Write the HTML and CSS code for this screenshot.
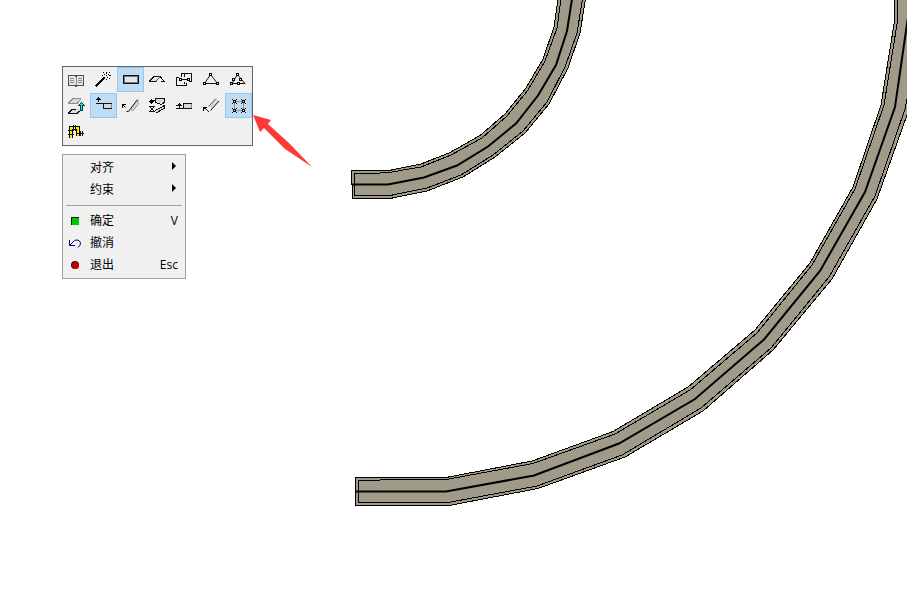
FILE: index.html
```html
<!DOCTYPE html>
<html lang="zh-CN">
<head>
  <meta charset="UTF-8">
  <meta name="viewport" content="width=device-width, initial-scale=1.0">
  <title>Wall Tool</title>
  <link rel="stylesheet" href="styles.css">
</head>
<body>
  <svg class="drawing" viewBox="0 0 907 590" preserveAspectRatio="xMinYMin slice" aria-hidden="true">
    <!-- inner curved wall -->
    <g class="wall">
      <path class="fill edge" d="M351.5 170.5H389L421 164L450 152.5L480 135.5L505 114L526 88L543 59L554 27L558 -1H585.5L580 33L568 68L549 104L525 133L495 157L463 177L427 191L390 198.5H352.5V184.5H351.5Z"/>
      <path class="edge" d="M561 -1L557 28L545 61L528 90L507 116L482 138L451 155L421 167L389 172.5L371 173.5H354.5V195.5H390L427 188L461 175L493 155L523 131L547 102L565 67L577 33L582.5 -1"/>
      <path class="axis" d="M352 184.500H388L424 177.5L457 165.5L488 146.5L516 123.5L538 95.5L556 65L567 31L572 -1"/>
    </g>
    <!-- outer curved wall -->
    <g class="wall">
      <path class="fill edge" d="M355.5 477.5H446L532 461L613 431.5L688 387L755 330L810 263L853 187L881 105L894.5 21V-1H920V75L907 115L877 199L832 279L773 350L703 411L625 457L538 488.5L449 505.5H355.5Z"/>
      <path class="edge" d="M897.5 -1V21L884 105L855 189L812 265L757 333L690 390L615 434L533 463.5L446 479.5H402L358.5 480.5V502.5H448L537 486L622 455L701 408L771 348L829 277L875 196L905 109L912 75"/>
      <path class="axis" d="M356 491.500H446L534 475.5L619 443.5L695 399L764 339.5L820 271L865 192L895 107L907 24L911 -1"/>
    </g>
    <path class="pointer" d="M253 115L271 120L268 124L290 144L312 167L285 149L264 128L260 132Z"/>
  </svg>

  <main class="palette">
    <div class="toolbar" role="toolbar" aria-label="工具">
      <button class="tool" aria-label="设置">
        <svg viewBox="0 0 27 25">
          <path class="light" d="M5 8h16v11H5z"/>
          <path class="outline" d="M5.500 18.500V8.500H12L13 9.500L14 8.500H20.500V18.500H14L13 19.500L12 18.500Z"/>
          <path class="grey" d="M7 11.500h4M7 13.500h4M7 15.500h4M15 11.500h4M15 13.500h4M15 15.500h4M13 10v8"/>
        </svg>
      </button>
      <button class="tool" aria-label="魔术棒">
        <svg viewBox="0 0 27 25">
          <path class="wand" d="M5.500 19.500L14.500 10.500"/>
          <path class="ink" d="M13 5h1v1h-1zM16 5h1v2h-1zM19 5h1v1h-1zM14 7h1v1h-1zM18 7h1v1h-1zM16 8h1v1h-1zM12 8h1v1h-1zM19 8h2v1h-2zM17 10h1v1h-1zM19 11h1v1h-1zM16 12h1v1h-1z"/>
        </svg>
      </button>
      <button class="tool active" aria-label="矩形" aria-pressed="true">
        <svg viewBox="0 0 27 25">
          <path class="light" d="M6 8h16v9H6z"/>
          <path class="dark" d="M6.500 8.500h15v8h-15z"/>
          <path class="shade" d="M7.500 9.500h13v6h-13z"/>
        </svg>
      </button>
      <button class="tool" aria-label="坡面">
        <svg viewBox="0 0 27 25">
          <path class="light" d="M10 10h6l-4 4H7z"/>
          <path class="dark" d="M5 14.500h7M5 14.500L10 9.500H16L20.500 14.500H17"/>
          <path class="outline" d="M12 14.500L16 9.500"/>
        </svg>
      </button>
      <button class="tool" aria-label="偏移">
        <svg viewBox="0 0 27 25">
          <path class="dark" d="M10.500 10V6.500h10v8H18M15.500 15.500v3h-10v-8H8M9 12.500h9M13.500 6v4M13.500 15v2"/>
          <path class="node" d="M8.500 11.500h2v2h-2zM16.500 11.500h2v2h-2z"/>
        </svg>
      </button>
      <button class="tool" aria-label="多边形">
        <svg viewBox="0 0 27 25">
          <path class="dark smooth" d="M12.500 7.500L6.500 16.500H19.500Z"/>
          <path class="node" d="M11.500 6.500h2v2h-2zM5.500 15.500h2v2h-2zM18.500 15.500h2v2h-2z"/>
        </svg>
      </button>
      <button class="tool" aria-label="编辑节点">
        <svg viewBox="0 0 27 25">
          <path class="dark smooth" d="M7 16.500L12.500 7.500L20 16.500H7"/>
          <path class="node" d="M11.500 6.500h2v2h-2zM7.500 11.500h2v2h-2zM5.500 15.500h2v2h-2zM14.500 11.500h2v2h-2zM12.500 15.500h2v2h-2z"/>
        </svg>
      </button>

      <button class="tool" aria-label="提升">
        <svg viewBox="0 0 27 25">
          <path class="pale" d="M5 10L10 5h8l-4 5zM5 20l5-4h8l-4 4z"/>
          <path class="grey" d="M5 10.500h9L18 6M5.500 10L10 5.500h8"/>
          <path class="dark" d="M5 20.500h9L18 17M5.500 20L9 16.500h4"/>
          <path class="cyan" d="M18.500 9.500L21.500 12.500H19.500V17.500H17.500V12.500H15.500Z"/>
        </svg>
      </button>
      <button class="tool active" aria-label="上边对齐" aria-pressed="true">
        <svg viewBox="0 0 27 25">
          <path class="pale" d="M13 10h9v6h-9z"/>
          <path class="dark" d="M6 10.500h16M13.500 10v5.500H22M6 6.500h5M8.500 4v5M7 5.500h3"/>
          <path class="grey" d="M21.500 11v4"/>
        </svg>
      </button>
      <button class="tool" aria-label="斜向对齐">
        <svg viewBox="0 0 27 25">
          <path class="pale" d="M13 15L20 7V12L15 18Z"/>
          <path class="dark smooth" d="M6 12L8.500 14.500M9.500 18.500H11.500L20.500 6.500"/>
          <path class="grey smooth" d="M13 15.500L15.500 18L21 11.500V7"/>
          <path class="ink" d="M5 11h4v1H7v1H6v2H5z"/>
        </svg>
      </button>
      <button class="tool" aria-label="翻转">
        <svg viewBox="0 0 27 25">
          <path class="pale" d="M12 6h8v4h-3l-2 1h-3zM12 17l8-4v3l-8 4z"/>
          <path class="dark" d="M11.500 10V5.500h9v4L17 11.500L11.500 9.500M11.500 17.500L20.500 12.500V15L12 20M6 7.500h5M7.500 6v5M5 13.500h6M5 18.500h6M6 14L10 18M10 14L6 18"/>
          <path class="ink" d="M5 8h5v1H9v1H8v1H7v-1H6V9H5z"/>
        </svg>
      </button>
      <button class="tool" aria-label="下边对齐">
        <svg viewBox="0 0 27 25">
          <path class="pale" d="M12 10h9v6h-9z"/>
          <path class="dark" d="M21 10.500h-8.500v5H21M5 15.500h7M5 12.500h6M8.500 10v5M7 11.500h3"/>
          <path class="grey" d="M20.500 11v4"/>
        </svg>
      </button>
      <button class="tool" aria-label="边线">
        <svg viewBox="0 0 27 25">
          <path class="pale" d="M11 13L18 6L21 8L14 16Z"/>
          <path class="outline smooth" d="M10.500 13.500L18 5.500"/>
          <path class="dark smooth" d="M7 15L11 19M12.500 17.500L21 8"/>
          <path class="ink" d="M5 14h4v1H7v1H6v2H5z"/>
        </svg>
      </button>
      <button class="tool active" aria-label="矩形节点" aria-pressed="true">
        <svg viewBox="0 0 27 25">
          <path class="grey" d="M9.500 8.500h9v9h-9z"/>
          <path class="dark" d="M7 6l5 5M12 6l-5 5M16 6l5 5M21 6l-5 5M7 15l5 5M12 15l-5 5M16 15l5 5M21 15l-5 5"/>
          <path class="node" d="M8.500 7.500h2v2h-2zM17.500 7.500h2v2h-2zM8.500 16.500h2v2h-2zM17.500 16.500h2v2h-2z"/>
        </svg>
      </button>

      <button class="tool" aria-label="复合墙">
        <svg viewBox="0 0 27 25">
          <path class="track" d="M8 19V9H15V17"/>
          <path class="track-core" d="M8 19V9H15V17"/>
          <path class="dark" d="M5 11.500h6M5 15.500h6M10.500 6v6M12.500 6v6M13 14.500h8M17.500 12v5M19.500 12v5"/>
        </svg>
      </button>
    </div>

    <div class="menu" role="menu">
      <button class="item" role="menuitem" aria-haspopup="true">
        <span class="label">对齐</span>
        <svg class="more" viewBox="0 0 4 8"><path class="ink" d="M0 0L4 4L0 8Z"/></svg>
      </button>
      <button class="item" role="menuitem" aria-haspopup="true">
        <span class="label">约束</span>
        <svg class="more" viewBox="0 0 4 8"><path class="ink" d="M0 0L4 4L0 8Z"/></svg>
      </button>
      <hr class="divider">
      <button class="item" role="menuitem">
        <svg class="mark" viewBox="0 0 14 12"><path fill="#00c800" d="M3 2h8v8H3z"/><path class="dark" d="M3.500 10V2.500H11"/></svg>
        <span class="label">确定</span>
        <kbd>V</kbd>
      </button>
      <button class="item" role="menuitem">
        <svg class="mark" viewBox="0 0 14 12"><path class="undo" d="M1.500 3v5.500H7M2 8L6.500 3.500Q9 2 11.500 4Q14 7 10 10.500"/></svg>
        <span class="label">撤消</span>
      </button>
      <button class="item" role="menuitem">
        <svg class="mark" viewBox="0 0 14 12"><circle cx="7" cy="6" r="4" fill="#400"/><circle cx="7.500" cy="6.500" r="3.500" fill="#c80000"/></svg>
        <span class="label">退出</span>
        <kbd>Esc</kbd>
      </button>
    </div>
  </main>
</body>
</html>
```

FILE: styles.css
```css
* {
  box-sizing: border-box;
}
body {
  margin: 0;
  min-height: 100vh;
  overflow: hidden;
  background: #fff;
  color: #000;
  font: 12px/22px "Open Sans", "Noto Sans CJK SC", sans-serif;
}
button {
  margin: 0;
  padding: 0;
  border: 0;
  background: none;
  color: inherit;
  font: inherit;
}
svg {
  display: block;
  fill: none;
}

/* drawing area */
.drawing {
  position: absolute;
  top: 0;
  left: 0;
  width: 100%;
  height: 100vh;
  pointer-events: none;
  z-index: -1;
}
.fill {
  fill: #a09a88;
}
.edge {
  stroke: #000;
  shape-rendering: crispEdges;
}
.axis {
  stroke: #000;
  stroke-width: 2;
}
.pointer {
  fill: #ff3b38;
}

/* floating panels */
.palette {
  display: flex;
  flex-direction: column;
  align-items: flex-start;
  gap: 8px;
  padding: 66px 62px;
}
.toolbar {
  display: grid;
  grid-template-columns: repeat(7, 27px);
  grid-auto-rows: 25px;
  row-gap: 1px;
  padding-bottom: 1px;
  border: 1px solid #646464;
  background: #f0f0f0;
}
.tool svg {
  width: 27px;
  height: 25px;
  shape-rendering: crispEdges;
}
.tool:hover {
  background: #dcebf7;
}
.tool.active {
  background: #c0dcf3;
  box-shadow: inset 0 0 0 1px #90c8f6;
}

/* icon parts */
.ink {
  fill: #000;
}
.dark {
  stroke: #111;
}
.outline {
  stroke: #505050;
}
.grey {
  stroke: #8c8c8c;
}
.shade {
  stroke: #6e7880;
}
.pale {
  fill: #d8d8d8;
}
.light {
  fill: #e6e6e6;
}
.node {
  fill: #f0f0f0;
  stroke: #000;
}
.smooth {
  shape-rendering: auto;
}
.wand {
  stroke: #000;
  stroke-width: 2;
}
.cyan {
  fill: #00f0f0;
  stroke: #003c3c;
}
.track {
  stroke: #000;
  stroke-width: 4;
}
.track-core {
  stroke: #ffe600;
  stroke-width: 2;
}
.undo {
  stroke: #000080;
}

.menu {
  display: flex;
  flex-direction: column;
  width: 124px;
  padding: 2px 3px;
  border: 1px solid #a0a0a0;
  background: #f0f0f0;
}
.item {
  display: grid;
  grid-template-columns: 14px 1fr auto;
  align-items: center;
  column-gap: 8px;
  height: 22px;
  padding: 0 4px 0 2px;
  text-align: left;
}
.item:hover {
  background: #c0dcf3;
}
.label {
  grid-column: 2;
}
.mark {
  grid-area: 1 / 1;
  width: 14px;
  height: 12px;
}
.more {
  width: 4px;
  height: 8px;
  margin: 0 2px 4px 0;
}
kbd {
  font: inherit;
}
.divider {
  width: 100%;
  height: 1px;
  margin: 4px 0;
  border: 0;
  background: #a0a0a0;
}
```
